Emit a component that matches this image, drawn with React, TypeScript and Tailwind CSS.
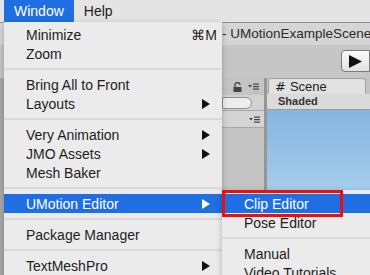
import type { ReactNode } from "react";

type MenuEntry =
  | { kind: "item"; label: string; shortcut?: string; submenu?: boolean; active?: boolean }
  | { kind: "sep" };

const windowMenu: MenuEntry[] = [
  { kind: "item", label: "Minimize", shortcut: "⌘M" },
  { kind: "item", label: "Zoom" },
  { kind: "sep" },
  { kind: "item", label: "Bring All to Front" },
  { kind: "item", label: "Layouts", submenu: true },
  { kind: "sep" },
  { kind: "item", label: "Very Animation", submenu: true },
  { kind: "item", label: "JMO Assets", submenu: true },
  { kind: "item", label: "Mesh Baker" },
  { kind: "sep" },
  { kind: "item", label: "UMotion Editor", submenu: true, active: true },
  { kind: "sep" },
  { kind: "item", label: "Package Manager" },
  { kind: "sep" },
  { kind: "item", label: "TextMeshPro", submenu: true }
];

const umotionMenu: MenuEntry[] = [
  { kind: "item", label: "Clip Editor", active: true },
  { kind: "item", label: "Pose Editor" },
  { kind: "sep" },
  { kind: "item", label: "Manual" },
  { kind: "item", label: "Video Tutorials" }
];

function Arrow({ white }: { white?: boolean }) {
  return (
    <svg width="8" height="10" viewBox="0 0 8 10" className="shrink-0">
      <polygon points="0,0 8,5 0,10" fill={white ? "#ffffff" : "#111111"} />
    </svg>
  );
}

function MenuRows({ entries, padLeft }: { entries: MenuEntry[]; padLeft: string }) {
  return (
    <>
      {entries.map((entry, i) =>
        entry.kind === "sep" ? (
          <div key={i} className="flex h-[12px] items-center">
            <div className="h-[2px] w-full bg-[#d9d9d9]" />
          </div>
        ) : (
          <div
            key={i}
            className={`flex h-[19px] items-center justify-between whitespace-nowrap ${padLeft} ${
              entry.active ? "bg-[#1f6fe3] text-white" : "text-[#1d1d1d]"
            }`}
          >
            <span>{entry.label}</span>
            {entry.shortcut && <span className="pr-[5px]">{entry.shortcut}</span>}
            {entry.submenu && (
              <span className="pr-[12px]">
                <Arrow white={entry.active} />
              </span>
            )}
          </div>
        )
      )}
    </>
  );
}

function HamburgerMenuIcon() {
  return (
    <svg width="11" height="7" viewBox="0 0 11 7">
      <polygon points="0,2 4,2 2,4.5" fill="#444" />
      <rect x="5" y="0.5" width="6" height="1.2" fill="#444" />
      <rect x="5" y="3" width="6" height="1.2" fill="#444" />
      <rect x="5" y="5.5" width="6" height="1.2" fill="#444" />
    </svg>
  );
}

function Panel({ children }: { children: ReactNode }) {
  return <div className="flex flex-col">{children}</div>;
}

export default function App() {
  return (
    <div className="relative h-[275px] w-[370px] overflow-hidden bg-[#bdbdbd] font-['Liberation_Sans',Arial,sans-serif] text-[14px] leading-none">
      {/* macOS menu bar */}
      <div className="flex h-[22px] items-center bg-[#e4e4e4]">
        <div className="ml-[4px] flex h-full items-center bg-[#1f6fe3] px-[10px] text-white">Window</div>
        <div className="ml-[10px] text-[#1d1d1d]">Help</div>
      </div>

      {/* Unity editor behind the menus */}
      <div className="flex h-[253px] flex-col border-t border-[#8c8c8c]">
        <div className="flex h-[22px] items-center overflow-hidden whitespace-nowrap bg-[#d5d5d5] pl-[222px] text-[13.5px] text-[#2b2b2b]">
          - UMotionExampleScene
        </div>
        <div className="flex h-[33px] items-start justify-end bg-[#c6c6c6] pt-[5px]">
          <div className="flex h-[22px] w-[29px] items-center rounded-l-[4px] border border-[#7a7a7a] bg-gradient-to-b from-[#fbfbfb] to-[#e2e2e2] pl-[7px]">
            <svg width="13" height="13" viewBox="0 0 13 13">
              <polygon points="0,0 13,6.5 0,13" fill="#111" />
            </svg>
          </div>
        </div>
        <div className="flex flex-1">
          <div className="w-[4px] bg-[#a9a9a9]" />
          <div className="w-[218px] bg-[#c4c4c4]" />
          {/* hierarchy panel */}
          <div className="flex w-[42px] flex-col bg-[#c4c4c4]">
            <Panel>
              <div className="flex h-[17px] items-center gap-[6px] pl-[11px]">
                <svg width="9" height="10" viewBox="0 0 9 10">
                  <path d="M2 5 V3 a2.5 2.5 0 0 1 5 0" stroke="#444" strokeWidth="1.3" fill="none" />
                  <rect x="0.5" y="5" width="8" height="5" fill="#444" />
                </svg>
                <HamburgerMenuIcon />
              </div>
              <div className="flex h-[16px] items-center border-b border-[#a8a8a8] bg-[#d2d2d2]">
                <div className="h-[12px] w-[30px] rounded-r-full border border-[#8f8f8f] bg-[#ededed]" />
              </div>
              <div className="flex h-[17px] items-center justify-end border-b border-[#a8a8a8] bg-[#d4d4d4] pr-[4px]">
                <HamburgerMenuIcon />
              </div>
            </Panel>
          </div>
          <div className="w-[3px] bg-[#969696]" />
          {/* scene view */}
          <div className="flex flex-1 flex-col">
            <div className="flex h-[16px] items-end bg-[#c4c4c4] pl-[1px]">
              <div className="flex h-[16px] w-[98px] items-center gap-[4px] rounded-t-[3px] border border-b-0 border-[#a3a3a3] bg-[#e1e1e1] pl-[6px] text-[13px] text-[#222]">
                <span className="font-['DejaVu_Sans',sans-serif] text-[13px]">#</span>
                <span>Scene</span>
              </div>
            </div>
            <div className="flex h-[16px] items-center border-b border-[#9c9c9c] bg-[#dadada] pl-[11px] text-[11px] font-bold text-[#333]">
              Shaded
            </div>
            <div className="flex-1 bg-gradient-to-b from-[#87b5df] to-[#c4e5f7]" />
          </div>
        </div>
      </div>

      {/* Window menu */}
      <div className="absolute left-[4px] top-[22px] h-[260px] w-[218px] bg-[#ebebeb] pt-[3px] shadow-[0_2px_6px_rgba(0,0,0,0.25)]">
        <MenuRows entries={windowMenu} padLeft="pl-[22px]" />
      </div>

      {/* UMotion Editor submenu */}
      <div className="absolute left-[222px] top-[190px] h-[100px] w-[160px] bg-[#ebebeb] pt-[4px] shadow-[0_2px_6px_rgba(0,0,0,0.25)]">
        <MenuRows entries={umotionMenu} padLeft="pl-[22px]" />
      </div>

      {/* red highlight box */}
      <div className="absolute left-[222px] top-[190px] h-[27px] w-[121px] border-[3px] border-[#f20d0d]" />
    </div>
  );
}
